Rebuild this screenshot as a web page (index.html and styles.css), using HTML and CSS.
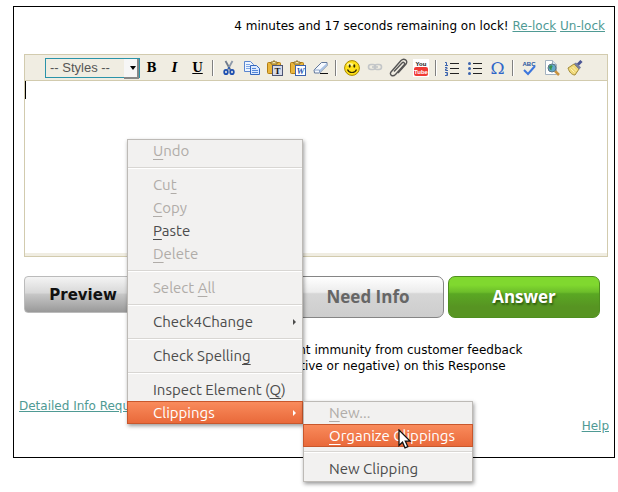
FILE: index.html
```html
<!DOCTYPE html>
<html lang="en">
<head>
  <meta charset="UTF-8" />
  <title>Answer Question</title>
  <link rel="stylesheet" href="styles.css">
</head>
<body>
  <div class="panel">
    <div class="lock-bar">
      <span>4 minutes and 17 seconds remaining on lock!</span>
      <a href="#relock">Re-lock</a>
      <a href="#unlock">Un-lock</a>
    </div>

    <!-- EDITOR -->
    <div class="editor">
      <div class="toolbar">
        <div class="styles-box">
          <select aria-label="Styles">
            <option>-- Styles --</option>
          </select>
        </div>
        <button class="tool letter" title="Bold">B</button>
        <button class="tool letter italic" title="Italic">I</button>
        <button class="tool letter underline" title="Underline">U</button>
        <span class="divider"></span>
        <button class="tool" title="Cut">
          <svg width="16" height="16" viewBox="0 0 16 16" fill="none">
            <path d="M4.5 1L9.5 10" stroke="#6f7b8c" stroke-width="1.8"/>
            <path d="M11.5 1L6.5 10" stroke="#8d99a9" stroke-width="1.8"/>
            <circle cx="8" cy="8" r="1" fill="#1d4fb0"/>
            <ellipse cx="5" cy="12" rx="1.8" ry="2.2" stroke="#1d4fb0" stroke-width="1.8"/>
            <ellipse cx="11" cy="12" rx="1.8" ry="2.2" stroke="#1d4fb0" stroke-width="1.8"/>
          </svg>
        </button>
        <button class="tool" title="Copy">
          <svg width="16" height="16" viewBox="0 0 16 16">
            <path d="M.5 1.500h6l3 3v7h-9z" fill="#eef5ff" stroke="#5b86cf"/>
            <path d="M2 4.500h4M2 6.500h4M2 8.500h4" stroke="#7fa8e6"/>
            <path d="M6.500 5.500h6l3 3v6h-9z" fill="#dbe9ff" stroke="#3568bd"/>
            <path d="M8 8.500h4M8 10.500h6M8 12.500h6" stroke="#5588d8"/>
          </svg>
        </button>
        <button class="tool" title="Paste as plain text">
          <svg width="16" height="16" viewBox="0 0 16 16">
            <rect x="0.500" y="2.500" width="13" height="11" rx="1" fill="#e9b53c" stroke="#b27d13"/>
            <path d="M4 4V2h2l1-1.500L8 2h2v2z" fill="#f9e9a8" stroke="#8c6b1d"/>
            <rect x="5.500" y="5.500" width="10" height="10" fill="#d6dbe9" stroke="#4d5574"/>
            <text class="paste-letter" x="10.500" y="14" fill="#111">T</text>
          </svg>
        </button>
        <button class="tool" title="Paste from Word">
          <svg width="16" height="16" viewBox="0 0 16 16">
            <rect x="0.500" y="2.500" width="13" height="11" rx="1" fill="#e9b53c" stroke="#b27d13"/>
            <path d="M4 4V2h2l1-1.500L8 2h2v2z" fill="#f9e9a8" stroke="#8c6b1d"/>
            <rect x="5.500" y="5.500" width="10" height="10" fill="#fff" stroke="#3c62ad"/>
            <text class="paste-letter slant" x="10.500" y="14" fill="#2456b4">W</text>
          </svg>
        </button>
        <button class="tool" title="Remove format">
          <svg width="16" height="16" viewBox="0 0 16 16">
            <path d="M7 13.500h8" stroke="#111"/>
            <path d="M1 10L8.500 2.500h5.500v3L6.500 13H1.500z" fill="#f5f9ff" stroke="#62789b"/>
            <path d="M6.500 12.500V10L14 3v2.500z" fill="#a9c2e4"/>
            <path d="M1 10h5.500V13" fill="none" stroke="#8ba3c7"/>
          </svg>
        </button>
        <span class="divider"></span>
        <button class="tool" title="Smiley">
          <svg width="16" height="16" viewBox="0 0 16 16">
            <circle cx="8" cy="8" r="7.400" fill="#ffe11a" stroke="#a98800"/>
            <ellipse cx="6" cy="4.500" rx="3" ry="1.500" fill="#fff79b"/>
            <ellipse cx="5.700" cy="6" rx="1" ry="1.700" fill="#332b00"/>
            <ellipse cx="10.300" cy="6" rx="1" ry="1.700" fill="#332b00"/>
            <path d="M3.500 9.500c1.500 4 7.500 4 9 0" fill="none" stroke="#332b00" stroke-width="1.200"/>
          </svg>
        </button>
        <button class="tool" title="Link" disabled>
          <svg width="16" height="16" viewBox="0 0 16 16" fill="none" stroke="#c3c6c8" stroke-width="1.600">
            <rect x="1.500" y="4.500" width="7" height="5" rx="2.500"/>
            <rect x="7.500" y="4.500" width="7" height="5" rx="2.500"/>
            <path d="M5 7h6"/>
          </svg>
        </button>
        <button class="tool" title="Attach">
          <svg width="20" height="20" viewBox="0 0 20 20" fill="none" stroke="#555" stroke-width="1.400">
            <path d="M6 13.500L14 5c1.500-1.500 3.500 0 2 2L7.500 16.500c-3 3-6.500 0-4.500-2.500L13 2.500c3-3 7.500 0 5 3.500L10 15"/>
          </svg>
        </button>
        <button class="tool" title="YouTube">
          <svg width="16" height="18" viewBox="0 0 16 18">
            <rect width="16" height="18" fill="#fff"/>
            <rect x="1" y="8" width="14" height="9" rx="2" fill="#f03a35"/>
            <text class="tube" x="8" y="7" fill="#111">You</text>
            <text class="tube" x="8" y="15" fill="#fff">Tube</text>
          </svg>
        </button>
        <span class="divider"></span>
        <button class="tool" title="Numbered list">
          <svg width="16" height="16" viewBox="0 0 16 16">
            <path d="M6 3.500h9M6 8.500h9M6 13.500h9" stroke="#222"/>
            <path d="M1 2.500h1.500V5M1 5.500h3M1 7.500h2v1.500H1.500v1.500H4M1 12.500h2.500V15.500H1M2 14h1.500" fill="none" stroke="#3b63ad"/>
          </svg>
        </button>
        <button class="tool" title="Bulleted list">
          <svg width="16" height="16" viewBox="0 0 16 16">
            <path d="M6 3.500h9M6 8.500h9M6 13.500h9" stroke="#222"/>
            <g fill="#3b63ad">
              <circle cx="2.500" cy="3.500" r="1.500"/>
              <circle cx="2.500" cy="8.500" r="1.500"/>
              <circle cx="2.500" cy="13.500" r="1.500"/>
            </g>
          </svg>
        </button>
        <button class="tool omega" title="Special character">Ω</button>
        <span class="divider"></span>
        <button class="tool" title="Check spelling">
          <svg width="16" height="16" viewBox="0 0 16 16">
            <text class="abc" x="8" y="6" fill="#24509e">ABC</text>
            <path d="M3 10l4 4 7-8" fill="none" stroke="#3c76dc" stroke-width="2"/>
          </svg>
        </button>
        <button class="tool" title="Preview">
          <svg width="16" height="16" viewBox="0 0 16 16">
            <path d="M1.500.500h7l4 4v10h-11z" fill="#fff" stroke="#a3b1bf"/>
            <path d="M8.500.500v4h4" fill="#d6e3ef" stroke="#a3b1bf"/>
            <path d="M11 11l4 4" stroke="#c9923d" stroke-width="2.500"/>
            <circle cx="8" cy="8" r="4" fill="#5fa8cc" stroke="#5c7482"/>
            <path d="M5 7c1-2 3-2 3.500-1S7 8 7.500 9.500 6 10.500 5 7z" fill="#36924a"/>
          </svg>
        </button>
        <button class="tool" title="Clean up">
          <svg width="16" height="16" viewBox="0 0 16 16">
            <path d="M10.500 5L14.500 1" stroke="#4a5594" stroke-width="3"/>
            <path d="M1 8l6-4 5 5-4 6c-3 0-6-3-7-7z" fill="#efd879" stroke="#a28a38"/>
            <path d="M3.500 8.500l4 4M5.500 7l4 4" stroke="#fff2b3"/>
            <path d="M7 3.500l2-1 5 5-2 2z" fill="#777f9e"/>
          </svg>
        </button>
      </div>
      <textarea class="editor-text" aria-label="Your answer" autofocus></textarea>
    </div>

    <div class="actions">
      <button class="preview">Preview</button>
      <button class="big-button need-info">Need Info</button>
      <button class="big-button answer">Answer</button>
    </div>

    <p class="immunity">I grant immunity from customer feedback<br>(positive or negative) on this Response</p>

    <div class="footer">
      <a href="#detailed">Detailed Info Request</a>
      <a class="help" href="#help">Help</a>
    </div>
  </div>

  <!-- CONTEXT MENU -->
  <div class="menu context-menu">
    <button disabled><u>U</u>ndo</button>
    <hr>
    <button disabled>Cu<u>t</u></button>
    <button disabled><u>C</u>opy</button>
    <button><u>P</u>aste</button>
    <button disabled><u>D</u>elete</button>
    <hr>
    <button disabled>Select <u>A</u>ll</button>
    <hr>
    <button class="has-sub">Check4Change</button>
    <hr>
    <button>Check Spellin<u>g</u></button>
    <hr>
    <button>Inspect Element (<u>Q</u>)</button>
    <button class="has-sub active">Clippings</button>
    <div class="menu submenu">
      <button disabled><u>N</u>ew...</button>
      <button class="active"><u>O</u>rganize Clippings</button>
      <hr>
      <button>New Clipping</button>
      <svg class="pointer" width="14" height="20" viewBox="0 0 14 20">
        <path d="M1 1v15.500l3.500-3.300 2.500 5.600 2.800-1.200-2.500-5.500H12z" fill="#fff" stroke="#111" stroke-width="1.300"/>
      </svg>
    </div>
  </div>
</body>
</html>
```
FILE: styles.css
```css
* {
  box-sizing: border-box;
}

body {
  margin: 0;
  min-height: 100vh;
  padding: 6px 3px 0 13px;
  background: #fff;
  color: #000;
  font-family: Verdana, "DejaVu Sans", sans-serif;
  font-size: 12px;
  line-height: 16px;
  position: relative;
}

a {
  color: #4f9a94;
}

button {
  font-family: inherit;
  cursor: pointer;
}

.panel {
  border: 1px solid #000;
  padding: 11px 6px 23px 10px;
}

.lock-bar {
  text-align: right;
  padding-right: 3px;
  margin-bottom: 20px;
}

/* EDITOR */
.editor {
  border: 1px solid #d2cbae;
  background: #f0ede2;
  padding-bottom: 3px;
}

.toolbar {
  display: flex;
  align-items: center;
  height: 26px;
  padding-left: 20px;
  border-bottom: 1px solid #d2cbae;
}

.styles-box {
  position: relative;
  width: 95px;
  height: 20px;
  flex: none;
}

.styles-box select {
  appearance: none;
  display: block;
  width: 100%;
  height: 100%;
  padding: 0 4px;
  border: 1px solid #2a93a9;
  border-radius: 0;
  background: #f0ede2;
  color: #555;
  font-family: "Liberation Sans", Arial, sans-serif;
  font-size: 13px;
}

.styles-box::before {
  content: '';
  position: absolute;
  top: 1px;
  right: 1px;
  width: 13px;
  height: 18px;
  background: #f6f6f6;
  border-right: 2px solid #888;
  border-bottom: 2px solid #888;
  pointer-events: none;
}

.styles-box::after {
  content: '';
  position: absolute;
  top: 8px;
  right: 4px;
  border: 3px solid transparent;
  border-top: 4px solid #000;
  border-bottom: 0;
  pointer-events: none;
}

.tool {
  display: flex;
  align-items: center;
  justify-content: center;
  flex: none;
  width: 23px;
  height: 22px;
  padding: 0;
  border: 0;
  background: none;
}

.tool svg {
  flex: none;
}

.letter {
  font-family: "DejaVu Serif", serif;
  font-size: 12px;
  font-weight: bold;
  color: #000;
}

.italic {
  font-style: italic;
}

.underline {
  text-decoration: underline;
}

.omega {
  font-family: "DejaVu Serif", serif;
  font-size: 17px;
  color: #2f66c8;
}

.paste-letter {
  font: bold 9px "Liberation Serif", serif;
  text-anchor: middle;
}

.slant {
  font-style: italic;
}

.tube {
  font: bold 6px "Liberation Sans Narrow", "Liberation Sans", sans-serif;
  text-anchor: middle;
}

.abc {
  font: bold 6px "Liberation Sans", sans-serif;
  text-anchor: middle;
}

.divider {
  flex: none;
  width: 2px;
  height: 16px;
  margin: 0 3px;
  border-left: 1px solid #808080;
  border-right: 1px solid #fff;
}

.editor-text {
  display: block;
  width: 100%;
  height: 172px;
  padding: 2px 0;
  border: 0;
  outline: none;
  resize: none;
  background: linear-gradient(#000, #000) 0 0 / 1px 18px no-repeat #fff;
  caret-color: transparent;
}

/* BUTTONS */
.actions {
  display: flex;
  align-items: flex-start;
  gap: 4px;
  padding-right: 8px;
  margin-top: 19px;
}

.preview {
  width: 118px;
  height: 37px;
  margin-right: auto;
  padding: 0;
  border: 1px solid #bbb;
  border-radius: 4px;
  background: linear-gradient(#f4f4f4, #d8d8d8 45%, #c6c6c6 50%, #999);
  color: #111;
  font-family: "DejaVu Sans", sans-serif;
  font-size: 15px;
  font-weight: bold;
}

.big-button {
  width: 152px;
  height: 42px;
  padding: 0 0 2px;
  border-radius: 7px;
  font-family: "Open Sans", sans-serif;
  font-size: 17px;
  font-weight: bold;
}

.need-info {
  border: 1px solid #858585;
  background: linear-gradient(#fff, #ececec 38%, #d6d6d6 42%, #cdcdcd);
  color: #666;
}

.answer {
  border: 1px solid #4f8f1f;
  background: linear-gradient(#80d82f 20%, #6cbd2a 38%, #5aa823 42%, #579422 75%);
  color: #fff;
  text-shadow: 1px 2px 2px #2f5c10;
}

.immunity {
  margin: 24px 0 0;
  padding-left: 247px;
}

.footer {
  display: flex;
  justify-content: space-between;
  margin: 24px -1px 0 -5px;
}

.help {
  margin-top: 20px;
}

/* CONTEXT MENU */
.menu {
  position: absolute;
  border: 1px solid #bdbab6;
  background: #f2f1f0;
  box-shadow: 1px 2px 4px #0006;
  font-family: Ubuntu, "Noto Sans", sans-serif;
}

.context-menu {
  top: 139px;
  left: 127px;
  width: 176px;
}

.submenu {
  top: 261px;
  left: 175px;
  width: 170px;
}

.menu button {
  display: block;
  width: 100%;
  height: 23px;
  padding: 0 0 2px 25px;
  border: 0;
  background: none;
  color: #4c4c4c;
  font-size: 15px;
  line-height: 20px;
  text-align: left;
  white-space: nowrap;
}

.menu button:disabled {
  color: #b0aca8;
}

.menu u {
  text-underline-offset: 3px;
}

.menu hr {
  height: 2px;
  margin: 4px 0 5px;
  border: 0;
  border-top: 1px solid #d8d6d3;
  background: #fff;
}

.submenu hr {
  margin: 5px 0;
}

.menu .has-sub {
  display: flex;
  justify-content: space-between;
  align-items: center;
  padding-right: 6px;
}

.has-sub::after {
  content: '';
  border: 3px solid transparent;
  border-left: 3px solid currentColor;
  border-right: 0;
}

.menu .active {
  width: calc(100% + 2px);
  margin: -1px;
  border: 1px solid #c8572c;
  padding-bottom: 0;
  background: linear-gradient(#f98b5c, #e9693a);
  color: #fff;
}

.pointer {
  position: absolute;
  top: 27px;
  left: 94px;
}
```
